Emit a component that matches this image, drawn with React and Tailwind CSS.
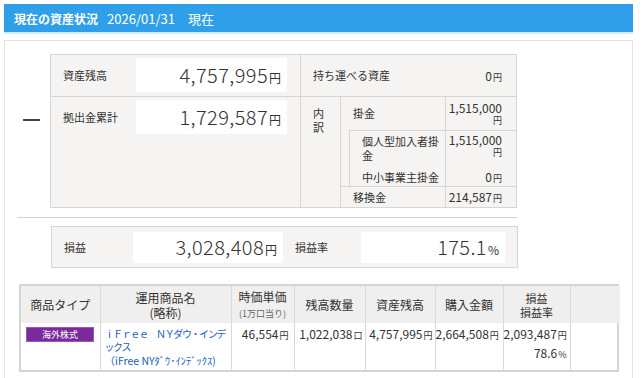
function Money({ value, unit = "円" }) {
  return (
    <span className="text-[12px] whitespace-nowrap">
      {value}
      <span className="text-[9px] ml-[1px]">{unit}</span>
    </span>
  );
}

function BigBox({ value, unit = "円", w = "w-[151px]", h = "h-[34px]" }) {
  return (
    <div className={`${w} ${h} bg-white flex items-center justify-end pr-[6px]`}>
      <span className="text-[20px] font-light leading-none tracking-[0.4px]">{value}</span>
      <span className="text-[12px] leading-none mt-[5px] ml-[1px]">{unit}</span>
    </div>
  );
}

const cols = [79, 131, 63, 71, 70, 68, 67, 50];

export default function App() {
  return (
    <div className="w-[640px] h-[378px] overflow-hidden bg-white pt-[4px] pl-[4px] text-[#333] font-['Noto_Sans_CJK_JP','Noto_Sans',sans-serif]">
      {/* header */}
      <div className="w-[629px] h-[30px] bg-[#2f9fe9] border-b-2 border-[#d5ebfa] flex items-center pl-[10px] pt-[2px] text-white">
        <span className="text-[12px] font-bold">現在の資産状況</span>
        <span className="ml-[9px] text-[13px]">2026/01/31　現在</span>
      </div>

      {/* panel */}
      <div className="mt-[6px] w-[629px] h-[340px] border border-b-0 border-[#e2e2e2]">
        <div className="flex pt-[13px]">
          <div className="w-[45px] pt-[65px] pl-[18px]">
            <div className="w-[17px] h-[2px] bg-[#444]" />
          </div>

          {/* top table */}
          <div className="w-[467px] h-[154px] border border-[#d6d6d6] bg-[#f5f4f2] flex text-[11px]">
            <div className="w-[250px] border-r border-[#d6d6d6]">
              <div className="h-[42px] border-b border-[#d6d6d6] flex items-start pt-[3px] pl-[12px]">
                <span className="w-[73px] mt-[9px]">資産残高</span>
                <BigBox value="4,757,995" />
              </div>
              <div className="flex items-start pt-[3px] pl-[12px]">
                <span className="w-[73px] mt-[9px]">拠出金累計</span>
                <BigBox value="1,729,587" />
              </div>
            </div>

            <div className="flex-1 flex flex-col">
              <div className="h-[42px] border-b border-[#d6d6d6] flex items-center justify-between pl-[12px] pr-[14px]">
                <span>持ち運べる資産</span>
                <Money value="0" />
              </div>
              <div className="flex flex-1">
                <div className="w-[40px] border-r border-[#d6d6d6] pl-[12px] pt-[9px] leading-[14px]">
                  内<br />訳
                </div>
                <div className="flex-1 flex flex-col">
                  <div className="h-[33px] flex">
                    <div className="w-[105px] border-r border-[#d6d6d6] pl-[12px] flex items-center">掛金</div>
                    <div className="flex-1 pr-[14px] pt-[4px] text-right">
                      <div className="text-[12px] leading-[14px]">1,515,000</div>
                      <div className="text-[9px] leading-[11px]">円</div>
                    </div>
                  </div>
                  <div className="h-[56px] flex">
                    <div className="w-[9px] border-r border-[#d6d6d6]" />
                    <div className="flex-1 border-t border-[#d6d6d6] flex flex-col">
                      <div className="h-[38px] flex">
                        <div className="w-[96px] border-r border-[#d6d6d6] pl-[12px] pt-[3px] leading-[14px]">
                          個人型加入者掛<br />金
                        </div>
                        <div className="flex-1 pr-[14px] pt-[2px] text-right">
                          <div className="text-[12px] leading-[14px]">1,515,000</div>
                          <div className="text-[9px] leading-[11px]">円</div>
                        </div>
                      </div>
                      <div className="flex-1 flex">
                        <div className="w-[96px] border-r border-[#d6d6d6] pl-[12px] flex items-center">中小事業主掛金</div>
                        <div className="flex-1 pr-[14px] flex items-center justify-end">
                          <Money value="0" />
                        </div>
                      </div>
                    </div>
                  </div>
                  <div className="flex-1 flex border-t border-[#d6d6d6]">
                    <div className="w-[105px] border-r border-[#d6d6d6] pl-[12px] flex items-center">移換金</div>
                    <div className="flex-1 pr-[14px] flex items-center justify-end">
                      <Money value="214,587" />
                    </div>
                  </div>
                </div>
              </div>
            </div>
          </div>
        </div>

        {/* separator */}
        <div className="ml-[12px] mt-[9px] w-[500px] border-t border-[#d2d2d2]" />

        {/* profit */}
        <div className="ml-[46px] mt-[8px] w-[467px] h-[42px] border border-[#d6d6d6] bg-[#f5f4f2] flex items-center pl-[12px] text-[11px]">
          <span className="w-[69px]">損益</span>
          <BigBox value="3,028,408" w="w-[150px]" h="h-[31px]" />
          <span className="ml-[12px] w-[66px]">損益率</span>
          <BigBox value="175.1" unit="%" w="w-[144px]" h="h-[31px]" />
        </div>

        {/* fund table */}
        <div className="ml-[14px] mt-[16px] w-[600px] border-2 border-[#d4d4d4]">
          <table className="border-collapse table-fixed w-full text-[12px]">
            <colgroup>
              {cols.map((c, i) => (
                <col key={i} style={{ width: c }} />
              ))}
            </colgroup>
            <thead>
              <tr className="h-[37px] bg-[#efefef] text-center leading-[15px]">
                <th className="font-normal border-r border-[#d9d9d9]">商品タイプ</th>
                <th className="font-normal border-r border-[#d9d9d9]">運用商品名<br />(略称)</th>
                <th className="font-normal border-r border-[#d9d9d9]">
                  時価単価<br /><span className="text-[9px] text-[#666]">(1万口当り)</span>
                </th>
                <th className="font-normal border-r border-[#d9d9d9]">残高数量</th>
                <th className="font-normal border-r border-[#d9d9d9]">資産残高</th>
                <th className="font-normal border-r border-[#d9d9d9]">購入金額</th>
                <th className="font-normal border-r border-[#d9d9d9] text-[11px] leading-[14px]">損益<br />損益率</th>
                <th />
              </tr>
            </thead>
            <tbody>
              <tr className="h-[47px] align-top">
                <td className="border-r border-[#d9d9d9] pt-[4px] pl-[5px]">
                  <div className="w-[68px] h-[15px] bg-[#7a2a9c] border border-[#9b55bb] text-white text-[9px] flex items-center justify-center">
                    海外株式
                  </div>
                </td>
                <td className="border-r border-[#d9d9d9] pl-[4px] pt-[4px] text-[#2160b9] leading-[13px]">
                  <div className="text-[10px] tracking-[-1.4px] whitespace-nowrap">ｉＦｒｅｅ　ＮＹダウ・インデ</div>
                  <div className="text-[10px] tracking-[-1.4px]">ックス</div>
                  <div className="text-[10.5px] mt-[1px] whitespace-nowrap">（iFree NYﾀﾞｳ･ｲﾝﾃﾞｯｸｽ)</div>
                </td>
                <td className="border-r border-[#d9d9d9] text-right pr-[5px] pt-[2px]"><Money value="46,554" /></td>
                <td className="border-r border-[#d9d9d9] text-right pr-[2px] pt-[2px]"><Money value="1,022,038" unit="口" /></td>
                <td className="border-r border-[#d9d9d9] text-right pr-[2px] pt-[2px]"><Money value="4,757,995" /></td>
                <td className="border-r border-[#d9d9d9] text-right pr-[4px] pt-[2px]"><Money value="2,664,508" /></td>
                <td className="border-r border-[#d9d9d9] text-right pr-[3px] pt-[2px] leading-[17px]">
                  <div><Money value="2,093,487" /></div>
                  <div><Money value="78.6" unit="%" /></div>
                </td>
                <td />
              </tr>
            </tbody>
          </table>
        </div>
      </div>
    </div>
  );
}
